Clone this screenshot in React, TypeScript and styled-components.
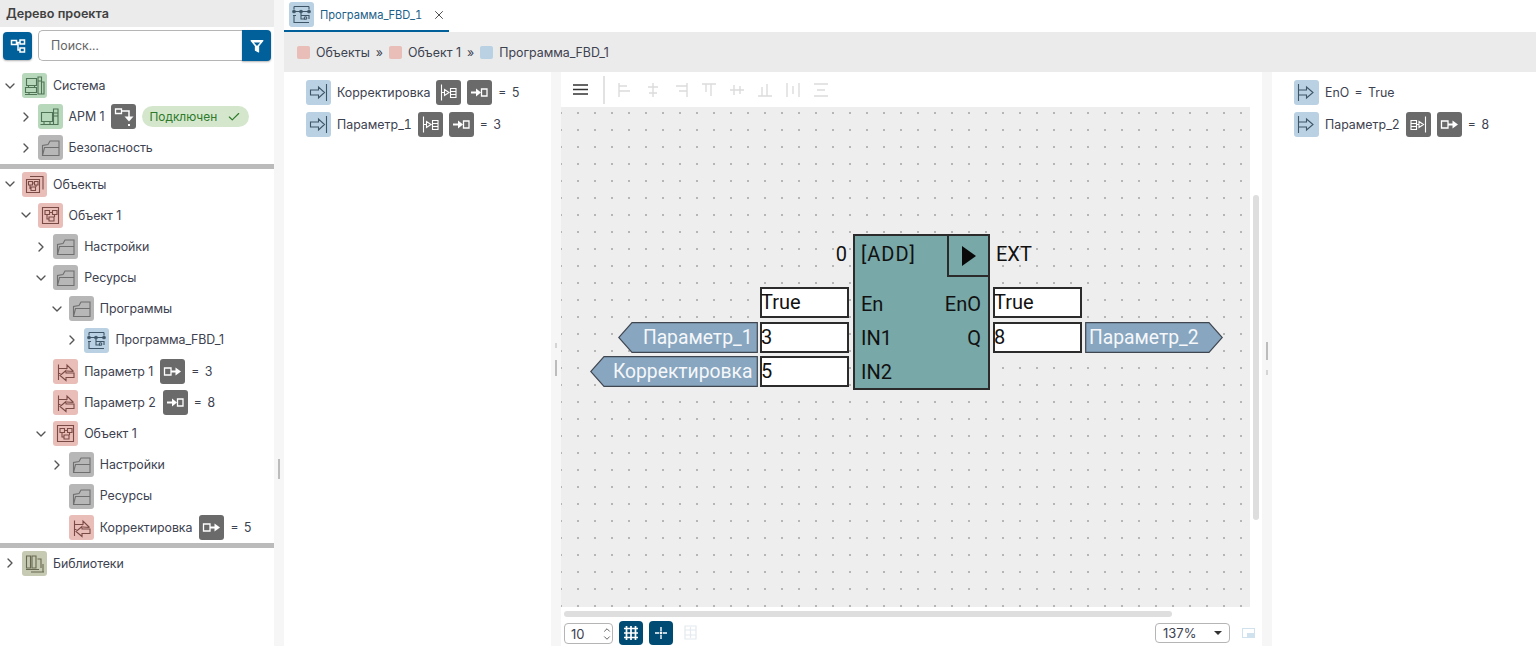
import React from "react";
import styled, { createGlobalStyle } from "styled-components";
import { Check, ChevronDown, ChevronRight, ChevronUp, X } from "lucide-react";

const Global = createGlobalStyle`
  html, body { margin: 0; padding: 0; height: 100%; background: #fff; overflow: hidden; }
  #root { height: 100%; }
  * { box-sizing: border-box; }
`;

const Page = styled.div`
  display: flex;
  height: 646px;
  width: 1536px;
  font-family: Inter, "Noto Sans", sans-serif;
  font-size: 12.4px;
  font-variant-numeric: tabular-nums;
  color: #3d4250;
  overflow: hidden;
`;
const TreePanel = styled.aside`
  width: 274px;
  flex: none;
  display: flex;
  flex-direction: column;
`;
const PanelTitle = styled.div`
  height: 27px;
  background: #ebebeb;
  padding-left: 6px;
  display: flex;
  align-items: center;
  font-size: 12.6px;
  font-weight: 600;
  color: #404040;
`;
const SearchRow = styled.div`
  height: 43px;
  display: flex;
  align-items: flex-start;
  padding: 3px 3px 0 3px;
`;
const SquareButton = styled.button`
  width: 29px;
  height: 28px;
  margin: 2px 6px 0 0;
  border: 0;
  padding: 0;
  border-radius: 4px;
  background: #01609a;
  box-shadow: 0 1px 2px rgba(0, 0, 0, 0.3);
  display: flex;
  align-items: center;
  justify-content: center;
`;
const SearchBox = styled.div`
  flex: 1;
  height: 31px;
  border: 1px solid #b5b5b5;
  border-right: 0;
  border-radius: 5px 0 0 5px;
  padding-left: 12px;
  display: flex;
  align-items: center;
  color: #666;
`;
const FilterButton = styled.button`
  width: 29px;
  height: 31px;
  border: 0;
  padding: 0;
  border-radius: 0 4px 4px 0;
  background: #01609a;
  box-shadow: 0 1px 2px rgba(0, 0, 0, 0.3);
  display: flex;
  align-items: center;
  justify-content: center;
`;
const Divider = styled.div`
  height: 5px;
  background: #bbbbbb;
`;
const Row = styled.div<{ $level: number }>`
  height: 31.2px;
  display: flex;
  align-items: center;
  gap: 6px;
  padding-left: ${(p) => 22 + p.$level * 15.6}px;
  position: relative;
  white-space: nowrap;
`;
const Caret = styled.span`
  position: absolute;
  margin-left: -20px;
  width: 16px;
  height: 16px;
  color: #555;
  display: flex;
`;
const Tile = styled.span<{ $bg: string; $fg?: string }>`
  width: 25px;
  height: 25px;
  flex: none;
  border-radius: 3px;
  background: ${(p) => p.$bg};
  color: ${(p) => p.$fg ?? "#fff"};
  display: block;
  svg { display: block; }
`;
const Value = styled.span`
  word-spacing: 2px;
`;
const Label = styled.span`
  position: relative;
  top: -0.12px;
  padding-right: 1px;
  letter-spacing: -0.06px;
  font-variant-numeric: normal;
`;
const Pill = styled.span`
  height: 21px;
  width: 107px;
  border-radius: 11px;
  background: #d4e7cd;
  color: #2e7a2a;
  font-size: 11.9px;
  display: flex;
  align-items: center;
  gap: 10px;
  padding-left: 7px;
`;
const Gutter = styled.div`
  width: 10px;
  flex: none;
  background: #f6f6f6;
  position: relative;
`;
const Handle = styled.span<{ $top: number; $h: number }>`
  position: absolute;
  left: 4px;
  top: ${(p) => p.$top}px;
  width: 2px;
  height: ${(p) => p.$h}px;
  background: #bcbcbc;
`;
const Nub = styled.span<{ $top: number }>`
  position: absolute;
  left: 4px;
  top: ${(p) => p.$top}px;
  width: 2px;
  height: 5px;
  background: #d4d4d4;
`;
const Main = styled.main`
  flex: 1;
  min-width: 0;
  display: flex;
  flex-direction: column;
`;
const TabBar = styled.div`
  height: 32px;
  flex: none;
  display: flex;
`;
const Tab = styled.div`
  width: 165px;
  height: 32px;
  border-bottom: 2px solid #01609a;
  padding: 2px 0 3px 5px;
  display: flex;
  align-items: center;
  gap: 6px;
  font-size: 11.15px;
  color: #1c5f88;
`;
const TabClose = styled.span`
  margin-left: 4px;
  display: flex;
  color: #444;
`;
const Crumbs = styled.nav`
  height: 40px;
  flex: none;
  background: #ebebeb;
  display: flex;
  align-items: center;
  padding-left: 13px;
  gap: 6px;
  font-size: 12.4px;
  font-variant-numeric: normal;
`;
const CrumbDot = styled.span<{ $bg: string }>`
  width: 13px;
  height: 13px;
  border-radius: 2px;
  background: ${(p) => p.$bg};
`;
const Body = styled.div`
  flex: 1;
  min-height: 0;
  display: flex;
`;
const VarPane = styled.section`
  width: 267px;
  flex: none;
  padding: 5px 0 0 22px;
`;
const OutPane = styled.section`
  flex: 1;
  padding: 5px 0 0 22px;
`;
const VarRow = styled.div`
  height: 31.5px;
  display: flex;
  align-items: center;
  gap: 6px;
  white-space: nowrap;
`;
const Center = styled.section`
  width: 701px;
  flex: none;
  display: flex;
  flex-direction: column;
`;
const Toolbar = styled.div`
  height: 35px;
  flex: none;
  display: flex;
  align-items: center;
  padding-left: 12px;
`;
const ToolDivider = styled.span`
  width: 2px;
  height: 28px;
  background: #e2e2e2;
  margin: 0 14px 0 15px;
`;
const AlignGroup = styled.div`
  display: flex;
  gap: 14px;
  margin-left: -1px;
`;
const CanvasRow = styled.div`
  height: 500px;
  flex: none;
  display: flex;
`;
const Canvas = styled.div`
  width: 689px;
  height: 500px;
  position: relative;
  overflow: hidden;
  background-color: #eeeeee;
  background-image: radial-gradient(circle at 1px 1px, #b4b4b4 0, #b4b4b4 0.7px, transparent 1px);
  background-size: 17px 17px;
  background-position: -1px 5px;
`;
const VScroll = styled.div`
  flex: 1;
  padding: 88px 3px 0 3px;
`;
const VThumb = styled.div`
  height: 325px;
  border-radius: 3px;
  background: #dedede;
`;
const HScroll = styled.div`
  height: 14px;
  flex: none;
  padding: 4px 0 0 3px;
`;
const HThumb = styled.div`
  width: 608px;
  height: 6px;
  border-radius: 3px;
  background: #dedede;
`;
const Footer = styled.div`
  flex: 1;
  display: flex;
  align-items: flex-start;
  padding-left: 3px;
`;
const Spinner = styled.div`
  width: 49px;
  height: 21px;
  margin-top: 2px;
  border: 1px solid #b5b5b5;
  border-radius: 4px;
  padding-left: 6px;
  display: flex;
  align-items: center;
  justify-content: space-between;
  font-size: 13px;
  font-variant-numeric: normal;
`;
const SpinArrows = styled.span`
  display: flex;
  flex-direction: column;
  width: 10px;
  color: #444;
  svg { display: block; margin: -1px 0; }
`;
const DarkButton = styled.button`
  width: 24px;
  height: 24px;
  margin-left: 6px;
  border: 0;
  padding: 0;
  border-radius: 4px;
  background: #004b73;
  display: flex;
  align-items: center;
  justify-content: center;
`;
const GhostIcon = styled.span`
  margin: 4px 0 0 11px;
  display: flex;
`;
const Zoom = styled.div`
  width: 75px;
  height: 20px;
  margin: 2px 0 0 auto;
  border: 1px solid #b5b5b5;
  border-radius: 4px;
  padding: 0 7px;
  display: flex;
  align-items: center;
  justify-content: space-between;
  font-size: 13px;
  font-variant-numeric: normal;
`;
const ZoomCaret = styled.span`
  width: 0;
  height: 0;
  border-left: 4px solid transparent;
  border-right: 4px solid transparent;
  border-top: 4px solid #333;
`;
const MiniMap = styled.span`
  margin: 7px 7px 0 12px;
  display: flex;
`;

/* ---- FBD diagram: nodes placed on a free canvas ---- */
const diagramFont = `Roboto, "Liberation Sans", sans-serif`;
const Block = styled.div<{ $x: number; $y: number }>`
  position: absolute;
  left: ${(p) => p.$x}px;
  top: ${(p) => p.$y}px;
  width: 137px;
  height: 156px;
  border: 2px solid #2b2b2b;
  background: #78a8a8;
  font: 20px ${diagramFont};
  color: #111;
`;
const BlockHead = styled.div`
  height: 51px;
  display: flex;
  justify-content: space-between;
  align-items: flex-start;
  padding-left: 6px;
`;
const BlockName = styled.span`
  line-height: 37px;
  letter-spacing: 1px;
`;
const PlayBox = styled.span`
  width: 42px;
  height: 41px;
  margin-right: -1px;
  border-left: 2px solid #2b2b2b;
  border-bottom: 2px solid #2b2b2b;
  display: flex;
  align-items: center;
  justify-content: center;
`;
const PinRow = styled.div`
  height: 34px;
  display: flex;
  justify-content: space-between;
  align-items: center;
  padding: 0 7px 0 6px;
`;
const CanvasText = styled.span<{ $x: number; $y: number; $right?: boolean }>`
  position: absolute;
  top: ${(p) => p.$y}px;
  ${(p) => (p.$right ? `right: ${689 - p.$x}px;` : `left: ${p.$x}px;`)}
  font: 20px/24px ${diagramFont};
  color: #111;
`;
const ValueBox = styled.div<{ $x: number; $y: number }>`
  position: absolute;
  left: ${(p) => p.$x}px;
  top: ${(p) => p.$y}px;
  width: 89px;
  height: 31px;
  border: 2px solid #2b2b2b;
  background: #fff;
  text-indent: -1px;
  font: 20px/27px ${diagramFont};
  color: #111;
`;
const Tag = styled.div<{ $x: number; $y: number; $w: number }>`
  position: absolute;
  left: ${(p) => p.$x}px;
  top: ${(p) => p.$y}px;
  width: ${(p) => p.$w}px;
  height: 31px;
  svg { position: absolute; inset: 0; }
`;
const TagText = styled.span<{ $left?: boolean }>`
  position: absolute;
  top: 0;
  ${(p) => (p.$left ? "left: 4px;" : "right: 5.5px;")}
  font: 19.3px/31px ${diagramFont};
  color: #f5f7fa;
  white-space: nowrap;
`;

/* ---- icons ---- */
const S = (p: { children: React.ReactNode; fill?: string }) => (
  <svg width="25" height="25" viewBox="0 0 25 25" fill={p.fill ?? "none"} stroke="currentColor" strokeWidth="1.1">
    {p.children}
  </svg>
);
const IcArm = () => (
  <S>
    <path d="M3.5 8.5h11v9h-11zM2.5 20.5h12.5M6 17.5v3M12 17.5v3M15.5 5h4.5v15.5h-4.5zM15.5 9h4.5M15.5 12h4.5" />
  </S>
);
const IcSystem = () => (
  <S>
    <path d="M4.5 5.5h10v7h-10zM6.5 12.5v2M12.5 12.5v2M3.5 14.5h11v5h-11zM7 19.5v2M3 21.5h12M16 4h3.5v17H16zM19.5 9H22v12h-2.5M16 8h3.5" />
  </S>
);
const IcFolder = () => (
  <S>
    <path d="M4.5 20.5V10.5L10 9.5l2-3.5h9v14.5zM4.5 20.5l2-8h14.5" />
  </S>
);
const IcObject = () => (
  <S>
    <path d="M4.5 4.5h16v16h-16zM7 7.5h4.5v4H7zM14.5 7.5H19v4h-4.5zM11 14h5v4h-5zM11.5 9.5h3M9 11.5V16h2M16.5 11.5V14" />
  </S>
);
const IcObjects = () => (
  <S>
    <path d="M4.5 7.5h13v13h-13zM8 4.5h13v13M6.5 9.5h4v3.5h-4zM12.5 9.5h3.5V13h-3.5zM9 15h4.5v3.5H9zM10.5 11h2M8 13v3.5h1M14 13v2" />
  </S>
);
const IcParam = () => (
  <S>
    <path d="M5.5 5.5v15.5M5.5 9.5h8.5V6l6.5 6.5M20.5 12.5L14 12M21 14h-8v-2.5L7 16.5l6 5v-3h8zM5.5 14.5h2" />
  </S>
);
const IcLibrary = () => (
  <S>
    <path d="M4.5 5h4v12h-4zM10 5h4v12h-4zM15.5 8H19v9M4 18.5h13M9 21h13M21 13v8" />
  </S>
);
const IcProgram = () => (
  <S>
    <path d="M5 4.5v3M5 13v7.5h15M20 4.5H5M20 4.5v3M20 13v4M4 9.5h17M4 13.5h3M12 13.5h8M12 11v6h4M9 9.5v0" />
    <circle cx="5" cy="9.5" r="1.3" />
    <circle cx="12" cy="9.5" r="1.3" />
    <circle cx="20" cy="9.5" r="1.3" />
    <circle cx="16.5" cy="16" r="1.3" />
  </S>
);
const IcInput = () => (
  <S>
    <path d="M4.5 10h8V7l6 5.5-6 5.5v-3h-8zM20.5 4v17" />
  </S>
);
const IcOutput = () => (
  <S>
    <path d="M4.5 4v17M4.5 10h8V7l6.5 5.5L12.5 18v-3h-8" />
  </S>
);
const IcBindOut = () => (
  <S>
    <path d="M4.5 9h6.5v7H4.5z" strokeWidth="1.3" />
    <path d="M11 12.5h5" strokeWidth="2" />
    <path d="M15.5 8.5l5.5 4-5.5 4z" fill="currentColor" stroke="none" />
  </S>
);
const IcBindIn = () => (
  <S>
    <path d="M4 12.5h6" strokeWidth="2" />
    <path d="M9 8.5l5 4-5 4z" fill="currentColor" stroke="none" />
    <path d="M14.5 9H20v7h-5.5z" strokeWidth="1.3" />
  </S>
);
const IcLink = () => (
  <S>
    <path d="M4.5 5h6v4.5h-6z" strokeWidth="1.3" />
    <path d="M10.5 7h7.5v6" strokeWidth="1.5" />
    <path d="M13.5 12.5h9L18 17.5z" fill="currentColor" stroke="none" />
    <path d="M17 20h2v2h-2z" fill="currentColor" stroke="none" />
  </S>
);
const IcPortIn = () => (
  <S>
    <path d="M5.5 4.5v16M5.5 12.5h3M8.5 9.5l4.5 3-4.5 3zM14.5 8.5H20v9h-5.5zM14.5 11.5H20M14.5 14.5H20" />
  </S>
);
const IcPortOut = () => (
  <S>
    <path d="M5 8.5h5.5v9H5zM5 11.5h5.5M5 14.5h5.5M10.5 12.5H13M13 9.5l4.5 3-4.5 3zM19.5 4.5v16" />
  </S>
);
const IcFilter = () => (
  <svg width="14" height="14" viewBox="0 0 13 13">
    <path d="M1 1.5h11L8 6.5V12L5 10.5v-4z" fill="#fff" stroke="#fff" strokeLinejoin="round" />
    <path d="M3.6 3.3h5.8L6.5 6.5z" fill="#01609a" />
  </svg>
);
const IcTree = () => (
  <svg width="16" height="16" viewBox="0 0 16 16" fill="none" stroke="#fff" strokeWidth="1.5">
    <path d="M1.5 2.5h5v4h-5zM10 2h4.5v4H10zM10 10h4.5v4H10zM6.5 4.5H10M8 4.5V12h2" />
  </svg>
);
const IcMenu = () => (
  <svg width="15" height="11" viewBox="0 0 15 11" stroke="#333" strokeWidth="1.4">
    <path d="M0 1h15M0 5.5h15M0 10h15" />
  </svg>
);
const alignPaths = [
  "M1 0v14M1 3h8M1 8h11",
  "M7 0v14M2 4h10M3 10h8",
  "M13 0v14M13 3H2M13 8H5",
  "M0 1h14M4 1v8M9 1v12",
  "M0 7h14M4 2v10M10 3v8",
  "M0 13h14M4 13V4M9 13V1",
  "M1 0v14M13 0v14M7 3v8",
  "M0 1h14M0 13h14M3 7h8",
];
const AlignIcon = ({ d }: { d: string }) => (
  <svg width="14" height="14" viewBox="0 0 14 14" fill="none" stroke="#dcdcdc" strokeWidth="1.4">
    <path d={d} />
  </svg>
);
const IcGrid = () => (
  <svg width="14" height="14" viewBox="0 0 14 14" stroke="#fff" strokeWidth="1.7">
    <path d="M2.5 0v14M7 0v14M11.5 0v14M0 2.5h14M0 7h14M0 11.5h14" />
  </svg>
);
const IcSnap = () => (
  <svg width="14" height="14" viewBox="0 0 14 14" stroke="#fff" strokeWidth="1.4">
    <path d="M7 1v4M7 9v4M1 7h4M9 7h4" />
    <circle cx="7" cy="7" r="0.7" fill="#fff" />
  </svg>
);
const IcGhost = () => (
  <svg width="13" height="15" viewBox="0 0 13 15" fill="none" stroke="#e4eaef" strokeWidth="1.2">
    <path d="M1 1h11v13H1zM1 5h11M1 10h11M6.5 2v11" />
  </svg>
);
const IcMini = () => (
  <svg width="13" height="10" viewBox="0 0 13 10">
    <rect x="0.5" y="0.5" width="12" height="9" fill="#fff" stroke="#cfe2ee" />
    <rect x="5" y="5" width="7" height="4" fill="#cfe2ee" />
  </svg>
);

const colors = {
  green: ["#b7d8bb", "#4f7355"],
  pink: ["#e9bdb8", "#7a4a45"],
  gray: ["#b7b7b7", "#6f6f6f"],
  blue: ["#b9d1e2", "#3d5566"],
  khaki: ["#c7caB2", "#66684f"],
  dark: ["#6a6a6a", "#ffffff"],
} as const;

type Color = keyof typeof colors;
const I = ({ c, children }: { c: Color; children: React.ReactNode }) => (
  <Tile $bg={colors[c][0]} $fg={colors[c][1]}>
    {children}
  </Tile>
);

type TreeItem = {
  level: number;
  open?: boolean;
  c: Color;
  icon: React.ReactNode;
  text: string;
  badge?: React.ReactNode;
  value?: string;
  pill?: boolean;
};

const group1: TreeItem[] = [
  { level: 0, open: true, c: "green", icon: <IcSystem />, text: "Система" },
  { level: 1, open: false, c: "green", icon: <IcArm />, text: "АРМ 1", badge: <IcLink />, pill: true },
  { level: 1, open: false, c: "gray", icon: <IcFolder />, text: "Безопасность" },
];
const group2: TreeItem[] = [
  { level: 0, open: true, c: "pink", icon: <IcObjects />, text: "Объекты" },
  { level: 1, open: true, c: "pink", icon: <IcObject />, text: "Объект 1" },
  { level: 2, open: false, c: "gray", icon: <IcFolder />, text: "Настройки" },
  { level: 2, open: true, c: "gray", icon: <IcFolder />, text: "Ресурсы" },
  { level: 3, open: true, c: "gray", icon: <IcFolder />, text: "Программы" },
  { level: 4, open: false, c: "blue", icon: <IcProgram />, text: "Программа_FBD_1" },
  { level: 2, c: "pink", icon: <IcParam />, text: "Параметр 1", badge: <IcBindOut />, value: "= 3" },
  { level: 2, c: "pink", icon: <IcParam />, text: "Параметр 2", badge: <IcBindIn />, value: "= 8" },
  { level: 2, open: true, c: "pink", icon: <IcObject />, text: "Объект 1" },
  { level: 3, open: false, c: "gray", icon: <IcFolder />, text: "Настройки" },
  { level: 3, c: "gray", icon: <IcFolder />, text: "Ресурсы" },
  { level: 3, c: "pink", icon: <IcParam />, text: "Корректировка", badge: <IcBindOut />, value: "= 5" },
];
const group3: TreeItem[] = [{ level: 0, open: false, c: "khaki", icon: <IcLibrary />, text: "Библиотеки" }];

const TreeRow = ({ item }: { item: TreeItem }) => (
  <Row $level={item.level}>
    {item.open !== undefined && (
      <Caret>{item.open ? <ChevronDown size={16} /> : <ChevronRight size={16} />}</Caret>
    )}
    <I c={item.c}>{item.icon}</I>
    <Label>{item.text}</Label>
    {item.badge && <I c="dark">{item.badge}</I>}
    {item.value && <Value>{item.value}</Value>}
    {item.pill && (
      <Pill>
        Подключен <Check size={14} />
      </Pill>
    )}
  </Row>
);

const X0 = 561;
const Y0 = 107;

const TagShape = ({ w, dir }: { w: number; dir: "left" | "right" }) => {
  const pts =
    dir === "left"
      ? `14,0.7 ${w - 0.7},0.7 ${w - 0.7},30.3 14,30.3 0.7,15.5`
      : `0.7,0.7 ${w - 14},0.7 ${w - 0.7},15.5 ${w - 14},30.3 0.7,30.3`;
  return (
    <svg width={w} height="31" viewBox={`0 0 ${w} 31`}>
      <polygon points={pts} fill="#88a6bf" stroke="#3f4650" strokeWidth="1.2" />
    </svg>
  );
};

export default function App() {
  return (
    <Page>
      <Global />
      <TreePanel>
        <PanelTitle>Дерево проекта</PanelTitle>
        <SearchRow>
          <SquareButton>
            <IcTree />
          </SquareButton>
          <SearchBox>Поиск...</SearchBox>
          <FilterButton>
            <IcFilter />
          </FilterButton>
        </SearchRow>
        {group1.map((it, i) => (
          <TreeRow key={i} item={it} />
        ))}
        <Divider />
        {group2.map((it, i) => (
          <TreeRow key={i} item={it} />
        ))}
        <Divider />
        {group3.map((it, i) => (
          <TreeRow key={i} item={it} />
        ))}
      </TreePanel>
      <Gutter>
        <Handle $top={459} $h={20} />
      </Gutter>
      <Main>
        <TabBar>
          <Tab>
            <I c="blue">
              <IcProgram />
            </I>
            Программа_FBD_1
            <TabClose>
              <X size={14} strokeWidth={1.6} />
            </TabClose>
          </Tab>
        </TabBar>
        <Crumbs>
          <CrumbDot $bg="#e9bdb8" />
          Объекты
          <span>»</span>
          <CrumbDot $bg="#e9bdb8" />
          Объект 1
          <span>»</span>
          <CrumbDot $bg="#b9d1e2" />
          Программа_FBD_1
        </Crumbs>
        <Body>
          <VarPane>
            <VarRow>
              <I c="blue">
                <IcInput />
              </I>
              Корректировка
              <I c="dark">
                <IcPortIn />
              </I>
              <I c="dark">
                <IcBindIn />
              </I>
              <Value>= 5</Value>
            </VarRow>
            <VarRow>
              <I c="blue">
                <IcInput />
              </I>
              Параметр_1
              <I c="dark">
                <IcPortIn />
              </I>
              <I c="dark">
                <IcBindIn />
              </I>
              <Value>= 3</Value>
            </VarRow>
          </VarPane>
          <Gutter>
            <Nub $top={271} />
            <Handle $top={288} $h={16} />
          </Gutter>
          <Center>
            <Toolbar>
              <IcMenu />
              <ToolDivider />
              <AlignGroup>
                {alignPaths.map((d) => (
                  <AlignIcon key={d} d={d} />
                ))}
              </AlignGroup>
            </Toolbar>
            <CanvasRow>
              <Canvas>
                <CanvasText $right $x={847 - X0} $y={242 - Y0}>
                  0
                </CanvasText>
                <Block $x={853 - X0} $y={234 - Y0}>
                  <BlockHead>
                    <BlockName>[ADD]</BlockName>
                    <PlayBox>
                      <svg width="14" height="20" viewBox="0 0 14 20">
                        <path d="M0 0l14 10L0 20z" fill="#0a0a0a" />
                      </svg>
                    </PlayBox>
                  </BlockHead>
                  <PinRow>
                    <span>En</span>
                    <span>EnO</span>
                  </PinRow>
                  <PinRow>
                    <span>IN1</span>
                    <span>Q</span>
                  </PinRow>
                  <PinRow>
                    <span>IN2</span>
                  </PinRow>
                </Block>
                <CanvasText $x={996 - X0} $y={242 - Y0}>
                  EXT
                </CanvasText>
                <ValueBox $x={760 - X0} $y={287 - Y0}>
                  True
                </ValueBox>
                <ValueBox $x={760 - X0} $y={322 - Y0}>
                  3
                </ValueBox>
                <ValueBox $x={760 - X0} $y={356 - Y0}>
                  5
                </ValueBox>
                <ValueBox $x={993 - X0} $y={287 - Y0}>
                  True
                </ValueBox>
                <ValueBox $x={993 - X0} $y={322 - Y0}>
                  8
                </ValueBox>
                <Tag $x={618 - X0} $y={322 - Y0} $w={140}>
                  <TagShape w={140} dir="left" />
                  <TagText>Параметр_1</TagText>
                </Tag>
                <Tag $x={590 - X0} $y={356 - Y0} $w={168}>
                  <TagShape w={168} dir="left" />
                  <TagText>Корректировка</TagText>
                </Tag>
                <Tag $x={1085 - X0} $y={322 - Y0} $w={138}>
                  <TagShape w={138} dir="right" />
                  <TagText $left>Параметр_2</TagText>
                </Tag>
              </Canvas>
              <VScroll>
                <VThumb />
              </VScroll>
            </CanvasRow>
            <HScroll>
              <HThumb />
            </HScroll>
            <Footer>
              <Spinner>
                10
                <SpinArrows>
                  <ChevronUp size={10} />
                  <ChevronDown size={10} />
                </SpinArrows>
              </Spinner>
              <DarkButton>
                <IcGrid />
              </DarkButton>
              <DarkButton>
                <IcSnap />
              </DarkButton>
              <GhostIcon>
                <IcGhost />
              </GhostIcon>
              <Zoom>
                137%
                <ZoomCaret />
              </Zoom>
              <MiniMap>
                <IcMini />
              </MiniMap>
            </Footer>
          </Center>
          <Gutter>
            <Handle $top={270} $h={18} />
            <Nub $top={298} />
          </Gutter>
          <OutPane>
            <VarRow>
              <I c="blue">
                <IcOutput />
              </I>
              <Value>EnO = True</Value>
            </VarRow>
            <VarRow>
              <I c="blue">
                <IcOutput />
              </I>
              Параметр_2
              <I c="dark">
                <IcPortOut />
              </I>
              <I c="dark">
                <IcBindOut />
              </I>
              <Value>= 8</Value>
            </VarRow>
          </OutPane>
        </Body>
      </Main>
    </Page>
  );
}
